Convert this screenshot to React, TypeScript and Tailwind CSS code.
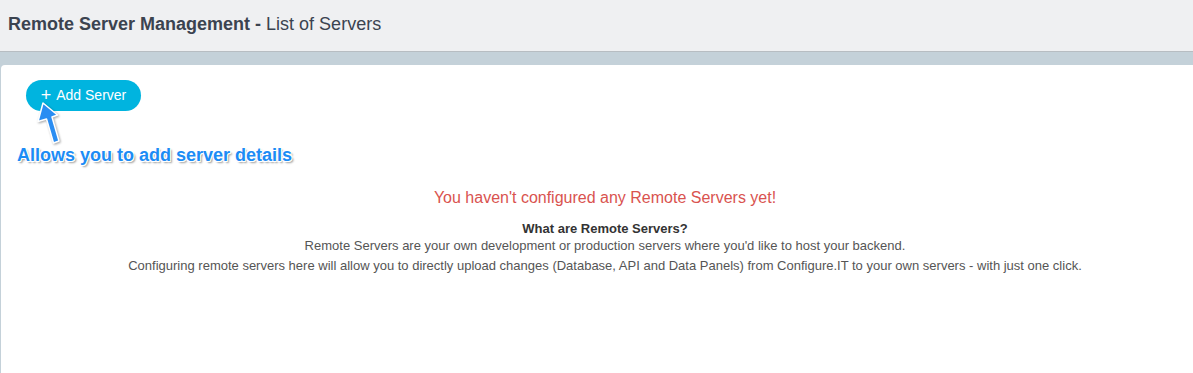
export default function App() {
  return (
    <div className="min-h-screen h-[373px] flex flex-col bg-[#c4d1d9] font-['Liberation_Sans',Arial,sans-serif] overflow-hidden">
      {/* Header */}
      <div className="h-[52px] shrink-0 bg-[#eff0f2] border-b border-[#b7bdc2] flex items-center px-[8px]">
        <h1 className="text-[18px] text-[#3b4350] leading-none pb-[4px]">
          <span className="font-bold">Remote Server Management - </span>
          <span>List of Servers</span>
        </h1>
      </div>

      {/* Panel */}
      <div className="flex-1 pt-[13px] pl-[1px]">
        <div className="relative h-full bg-white rounded-tl-[4px] -mr-[16px]">
          <div className="pt-[15px] pl-[25px]">
            <button className="h-[31px] w-[115px] rounded-full bg-[#00b4df] text-white text-[14px] flex items-center justify-center gap-[5px]">
              <span className="text-[18px] leading-none -mt-[2px]">+</span>
              <span>Add Server</span>
            </button>
          </div>

          {/* Annotation arrow */}
          <svg
            className="absolute left-[30px] top-[34px] w-[36px] h-[48px] drop-shadow-[1px_1px_1px_rgba(0,0,0,0.35)]"
            viewBox="0 0 36 48"
          >
            <path
              d="M12 4 L26.5 16 L21 18 L28 42 L22.5 44 L15.5 20 L7 22.5 Z"
              fill="#2a8df2"
              stroke="#fff"
              strokeWidth="1.5"
              strokeLinejoin="round"
            />
          </svg>

          <div className="pt-[35px] pl-[16px] text-[18px] font-bold text-[#1c8cf5] leading-none [text-shadow:-1px_-1px_0_#fff,1px_-1px_0_#fff,-1px_1px_0_#fff,1px_1px_0_#fff,0_-1px_0_#fff,0_1px_0_#fff,2px_2px_2px_rgba(0,0,0,0.4)]">
            Allows you to add server details
          </div>

          <div className="pt-[24px] text-center">
            <p className="text-[16px] text-[#d9534f] leading-[20px]">
              You haven't configured any Remote Servers yet!
            </p>
            <p className="mt-[12px] text-[13px] font-bold text-[#333] leading-[17px]">
              What are Remote Servers?
            </p>
            <p className="text-[13px] text-[#555] leading-[18px]">
              Remote Servers are your own development or production servers where you'd like to host your backend.
            </p>
            <p className="text-[13px] text-[#555] leading-[19px] mt-[1px]">
              Configuring remote servers here will allow you to directly upload changes (Database, API and Data Panels) from Configure.IT to your own servers - with just one click.
            </p>
          </div>
        </div>
      </div>
    </div>
  );
}
